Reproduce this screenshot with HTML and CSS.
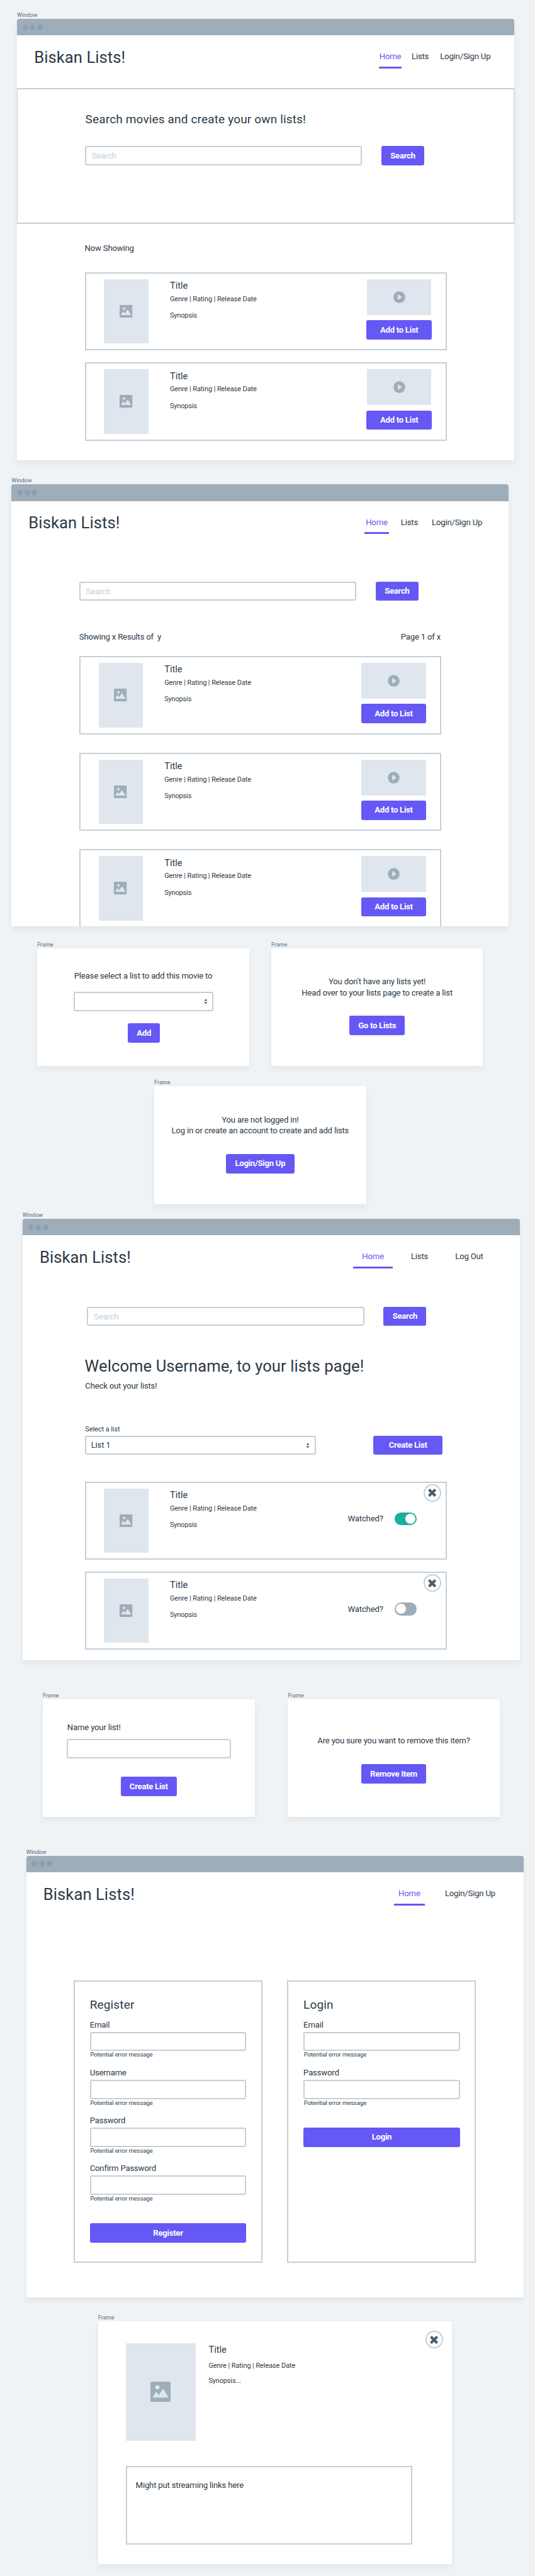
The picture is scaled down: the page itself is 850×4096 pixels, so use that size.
FILE: index.html
```
<!DOCTYPE html>
<html lang="en">
<head>
<meta charset="utf-8">
<title>Biskan Lists wireframes</title>
<link rel="stylesheet" href="styles.css">
</head>
<body>
<svg class="sprite" aria-hidden="true">
  <symbol id="image" viewBox="0 0 28 28">
    <rect width="28" height="28" rx="2" fill="#9eadba"/>
    <circle cx="9.7" cy="7.8" r="2.8" fill="#dfe6ed"/>
    <path d="M2.8 22 8 13.8l3.5 4.8 6.1-8.9L25.2 22z" fill="#dfe6ed"/>
  </symbol>
  <symbol id="play" viewBox="0 0 26 26">
    <circle cx="13" cy="13" r="12.8" fill="#9eadba"/>
    <path d="M9.8 6.6 18.6 13l-8.8 6.4z" fill="#dfe6ed"/>
  </symbol>
  <symbol id="cross" viewBox="0 0 18 18">
    <g fill="#4b5d6b" transform="rotate(45 9 9)">
      <rect x="-.9" y="6.1" width="19.8" height="5.8" rx="1.2"/>
      <rect x="6.1" y="-.9" width="5.8" height="19.8" rx="1.2"/>
    </g>
  </symbol>
  <symbol id="arrows" viewBox="0 0 8 12">
    <path d="M4 .6 7.2 4.6H.8zM4 11.4.8 7.4h6.4z" fill="#2c3a47"/>
  </symbol>
</svg>

<div class="canvas">

  <section class="artboard window home">
    <span class="label">Window</span>
    <div class="screen">
      <div class="bar"><i></i><i></i><i></i></div>
      <header class="header">
        <h1 class="brand">Biskan Lists!</h1>
        <nav class="nav"><a class="active">Home</a><a>Lists</a><a>Login/Sign Up</a></nav>
      </header>
      <div class="hero">
        <h2 class="heading">Search movies and create your own lists!</h2>
        <form class="search"><input class="field" placeholder="Search"><button class="btn" type="button">Search</button></form>
      </div>
      <p class="text section-title">Now Showing</p>
      <div class="cards">
        <article class="card">
          <div class="poster"><svg><use href="#image"/></svg></div>
          <div class="info"><h3>Title</h3><p>Genre | Rating | Release Date</p><p class="synopsis">Synopsis</p></div>
          <div class="side"><div class="thumb"><svg><use href="#play"/></svg></div><button class="btn" type="button">Add to List</button></div>
        </article>
        <article class="card">
          <div class="poster"><svg><use href="#image"/></svg></div>
          <div class="info"><h3>Title</h3><p>Genre | Rating | Release Date</p><p class="synopsis">Synopsis</p></div>
          <div class="side"><div class="thumb"><svg><use href="#play"/></svg></div><button class="btn" type="button">Add to List</button></div>
        </article>
      </div>
    </div>
  </section>

  <section class="artboard window results">
    <span class="label">Window</span>
    <div class="screen">
      <div class="bar"><i></i><i></i><i></i></div>
      <header class="header">
        <h1 class="brand">Biskan Lists!</h1>
        <nav class="nav"><a class="active">Home</a><a>Lists</a><a>Login/Sign Up</a></nav>
      </header>
      <form class="search"><input class="field" placeholder="Search"><button class="btn" type="button">Search</button></form>
      <div class="text summary"><span>Showing x Results of &nbsp;y</span><span>Page 1 of x</span></div>
      <div class="cards">
        <article class="card">
          <div class="poster"><svg><use href="#image"/></svg></div>
          <div class="info"><h3>Title</h3><p>Genre | Rating | Release Date</p><p class="synopsis">Synopsis</p></div>
          <div class="side"><div class="thumb"><svg><use href="#play"/></svg></div><button class="btn" type="button">Add to List</button></div>
        </article>
        <article class="card">
          <div class="poster"><svg><use href="#image"/></svg></div>
          <div class="info"><h3>Title</h3><p>Genre | Rating | Release Date</p><p class="synopsis">Synopsis</p></div>
          <div class="side"><div class="thumb"><svg><use href="#play"/></svg></div><button class="btn" type="button">Add to List</button></div>
        </article>
        <article class="card">
          <div class="poster"><svg><use href="#image"/></svg></div>
          <div class="info"><h3>Title</h3><p>Genre | Rating | Release Date</p><p class="synopsis">Synopsis</p></div>
          <div class="side"><div class="thumb"><svg><use href="#play"/></svg></div><button class="btn" type="button">Add to List</button></div>
        </article>
      </div>
    </div>
  </section>

  <section class="artboard dialog pick-list">
    <span class="label">Frame</span>
    <p class="text">Please select a list to add this movie to</p>
    <div class="field select"><svg><use href="#arrows"/></svg></div>
    <button class="btn" type="button">Add</button>
  </section>

  <section class="artboard dialog message no-lists">
    <span class="label">Frame</span>
    <p class="text">You don't have any lists yet!<br>Head over to your lists page to create a list</p>
    <button class="btn" type="button">Go to Lists</button>
  </section>

  <section class="artboard dialog message logged-out">
    <span class="label">Frame</span>
    <p class="text">You are not logged in!<br>Log in or create an account to create and add lists</p>
    <button class="btn" type="button">Login/Sign Up</button>
  </section>

  <section class="artboard window lists">
    <span class="label">Window</span>
    <div class="screen">
      <div class="bar"><i></i><i></i><i></i></div>
      <header class="header">
        <h1 class="brand">Biskan Lists!</h1>
        <nav class="nav"><a class="active">Home</a><a>Lists</a><a>Log Out</a></nav>
      </header>
      <form class="search"><input class="field" placeholder="Search"><button class="btn" type="button">Search</button></form>
      <h2 class="brand welcome">Welcome Username, to your lists page!</h2>
      <p class="text tagline">Check out your lists!</p>
      <div class="picker">
        <div class="picker-field">
          <span class="small">Select a list</span>
          <div class="field select"><span>List 1</span><svg><use href="#arrows"/></svg></div>
        </div>
        <button class="btn" type="button">Create List</button>
      </div>
      <div class="cards">
        <article class="card">
          <div class="poster"><svg><use href="#image"/></svg></div>
          <div class="info"><h3>Title</h3><p>Genre | Rating | Release Date</p><p class="synopsis">Synopsis</p></div>
          <div class="watched text"><span>Watched?</span><span class="toggle on"></span></div>
          <span class="close"><svg><use href="#cross"/></svg></span>
        </article>
        <article class="card">
          <div class="poster"><svg><use href="#image"/></svg></div>
          <div class="info"><h3>Title</h3><p>Genre | Rating | Release Date</p><p class="synopsis">Synopsis</p></div>
          <div class="watched text"><span>Watched?</span><span class="toggle"></span></div>
          <span class="close"><svg><use href="#cross"/></svg></span>
        </article>
      </div>
    </div>
  </section>

  <section class="artboard dialog new-list">
    <span class="label">Frame</span>
    <p class="text">Name your list!</p>
    <input class="field">
    <button class="btn" type="button">Create List</button>
  </section>

  <section class="artboard dialog remove-item">
    <span class="label">Frame</span>
    <p class="text">Are you sure you want to remove this item?</p>
    <button class="btn" type="button">Remove Item</button>
  </section>

  <section class="artboard window account">
    <span class="label">Window</span>
    <div class="screen">
      <div class="bar"><i></i><i></i><i></i></div>
      <header class="header">
        <h1 class="brand">Biskan Lists!</h1>
        <nav class="nav"><a class="active">Home</a><a>Login/Sign Up</a></nav>
      </header>
      <div class="forms">
        <form class="panel">
          <h2 class="heading">Register</h2>
          <label class="text">Email<input class="field"><small>Potential error message</small></label>
          <label class="text">Username<input class="field"><small>Potential error message</small></label>
          <label class="text">Password<input class="field"><small>Potential error message</small></label>
          <label class="text">Confirm Password<input class="field"><small>Potential error message</small></label>
          <button class="btn" type="button">Register</button>
        </form>
        <form class="panel">
          <h2 class="heading">Login</h2>
          <label class="text">Email<input class="field"><small>Potential error message</small></label>
          <label class="text">Password<input class="field"><small>Potential error message</small></label>
          <button class="btn" type="button">Login</button>
        </form>
      </div>
    </div>
  </section>

  <section class="artboard detail">
    <span class="label">Frame</span>
    <span class="close"><svg><use href="#cross"/></svg></span>
    <div class="movie">
      <div class="poster large"><svg><use href="#image"/></svg></div>
      <div class="info"><h3>Title</h3><p>Genre | Rating | Release Date</p><p class="synopsis">Synopsis...</p></div>
    </div>
    <div class="text links">Might put streaming links here</div>
  </section>

</div>
</body>
</html>
```
FILE: styles.css
```
* { box-sizing: border-box; margin: 0; padding: 0; }

html, body { background: #eff3f6; }
body { width: 850px; height: 4096px; overflow: hidden; }

.sprite { position: absolute; width: 0; height: 0; }

/* Free canvas holding the artboards, drawn at reduced scale */
.canvas {
  --line: 2.75px;
  position: relative;
  width: 1162px;
  height: 5598px;
  zoom: 0.7316;
  font-family: Roboto, "Liberation Sans", sans-serif;
  color: #2c3a47;
}

.artboard {
  position: absolute;
  background: #fff;
  box-shadow: 0 8px 12px rgba(40, 55, 65, .06), 0 0 4px rgba(40, 55, 65, .04);
}
.window { width: 1080px; height: 960px; border-radius: 5px 5px 0 0; }
.home { left: 37px; top: 41px; }
.results { left: 25px; top: 1053px; }
.lists { left: 49px; top: 2649px; }
.account { left: 57px; top: 4033px; }
.pick-list { left: 81px; top: 2061px; }
.no-lists { left: 589px; top: 2061px; }
.logged-out { left: 335px; top: 2361px; }
.new-list { left: 93px; top: 3693px; }
.remove-item { left: 625px; top: 3693px; }
.detail { left: 213px; top: 5045px; width: 768px; height: 528px; }

.label {
  position: absolute;
  left: 0;
  bottom: 100%;
  margin-bottom: -1px;
  font-size: 12.5px;
  font-weight: 500;
  line-height: 16px;
  letter-spacing: -.1px;
  color: #788896;
}

/* Type */
.text { font-size: 18px; line-height: 24px; letter-spacing: -.27px; }
.small { font-size: 15px; line-height: 20px; letter-spacing: -.1px; }
.brand { font-size: 35px; line-height: 42px; font-weight: 400; letter-spacing: .1px; }
.heading { font-size: 26px; line-height: 32px; font-weight: 400; letter-spacing: .2px; }

/* Controls */
.btn {
  height: 42px;
  border: 0;
  border-radius: 4px;
  background: #6558f5;
  color: #fff;
  font: 700 18px/24px Roboto, "Liberation Sans", sans-serif;
  letter-spacing: -.4px;
  white-space: nowrap;
}
.field {
  display: block;
  height: 42px;
  border: var(--line) solid #c3cfd9;
  border-radius: 4px;
  background: #fff;
  font: 400 18px/24px Roboto, "Liberation Sans", sans-serif;
  letter-spacing: -.27px;
  color: #2c3a47;
}
.field::placeholder { color: #c3cfd9; opacity: 1; }
.select {
  display: flex;
  align-items: center;
  justify-content: flex-end;
  padding: 0 11px;
}
.select span { margin-right: auto; }
.select svg { width: 8px; height: 12px; }

.close {
  position: absolute;
  display: flex;
  align-items: center;
  justify-content: center;
  width: 38px;
  height: 38px;
  border: var(--line) solid #c3cfd9;
  border-radius: 50%;
  background: #fff;
}
.close svg { width: 18px; height: 18px; }

.toggle {
  display: flex;
  width: 48px;
  height: 28px;
  padding: 3px;
  border-radius: 14px;
  background: #9eadba;
}
.toggle::before { content: ""; width: 22px; height: 22px; border-radius: 50%; background: #fff; }
.toggle.on { justify-content: flex-end; background: #1aae9f; }

/* Window chrome */
.screen { height: 100%; overflow: hidden; border-radius: 5px 5px 0 0; }
.bar {
  display: flex;
  align-items: center;
  gap: 4px;
  height: 36px;
  padding-left: 12px;
  background: #9eadba;
}
.bar i { width: 12px; height: 12px; border-radius: 50%; background: #8e9eac; }

.header {
  display: flex;
  justify-content: space-between;
  align-items: flex-start;
  height: 115px;
  padding-left: 37px;
}
.header .brand { margin-top: 27px; }
.nav {
  display: grid;
  margin-top: 34px;
  font-size: 18px;
  line-height: 24px;
  letter-spacing: -.27px;
  text-align: center;
  white-space: nowrap;
}
.nav a { padding-bottom: 10px; border-bottom: 4.2px solid transparent; }
.nav .active { color: #6558f5; border-color: #6558f5; }
.home .nav { grid-template-columns: 49px 43px 115px; gap: 19px; margin-right: 49px; }
.results .nav { grid-template-columns: 54px 48px 119px; gap: 20px; margin-right: 53px; }
.lists .nav { grid-template-columns: 86px 78px 100px; gap: 19px; margin-right: 60px; }
.account .nav { grid-template-columns: 68px 132px; gap: 32px; margin-right: 50px; }

.search { display: flex; gap: 42px; margin-left: 147px; }
.search .field { width: 602px; padding: 0 12px; }
.search .btn { width: 93px; }

/* Movie cards */
.cards { display: flex; flex-direction: column; gap: 26px; margin-left: 147px; }
.card {
  position: relative;
  display: flex;
  flex: none;
  width: 786px;
  height: 170px;
  padding: 12.3px 29.3px 0 39.3px;
  border: var(--line) solid #c3cfd9;
}
.poster {
  display: flex;
  flex: none;
  align-items: center;
  justify-content: center;
  width: 96px;
  height: 140px;
  background: #dfe6ed;
}
.poster svg { width: 28px; height: 28px; }
.info { flex: 1; margin: 3px 0 0 47px; font-size: 15px; line-height: 20px; letter-spacing: -.1px; }
.info h3 { margin-bottom: 7px; font-size: 20px; line-height: 24px; font-weight: 400; letter-spacing: 0; }
.info .synopsis { margin-top: 16px; letter-spacing: -.2px; }
.side { display: flex; flex-direction: column; align-items: center; gap: 11px; width: 142px; }
.side .btn { width: 100%; }
.thumb {
  display: flex;
  align-items: center;
  justify-content: center;
  width: 140px;
  height: 78px;
  background: #dfe6ed;
}
.thumb svg { width: 26px; height: 26px; }
.watched { display: flex; align-items: center; gap: 25px; height: 28px; margin: 52px 33px 0 0; }
.card .close { top: 3.3px; right: 9.3px; }

/* Home */
.hero {
  height: 294px;
  padding-top: 49px;
  border: var(--line) solid #c3cfd9;
  border-left-width: 1.4px;
  border-right-width: 1.4px;
}
.hero .heading { margin-left: 147px; }
.hero .search { margin: 42px 0 0 146px; }
.section-title { margin: 41px 0 41px 147px; }

/* Results */
.results .search { margin-top: 60px; }
.results .cards { gap: 40px; }
.summary { display: flex; justify-content: space-between; width: 785px; margin: 67px 0 29px 147px; }

/* Lists */
.lists .search { margin: 40px 0 0 140px; }
.welcome { margin: 66px 0 0 135px; }
.tagline { margin: 11px 0 72px 136px; }
.picker { display: flex; align-items: flex-end; gap: 125px; margin: 0 0 58px 135px; }
.picker-field { display: flex; flex-direction: column; gap: 3px; width: 502px; }
.picker-field .small { padding-left: 1px; }
.picker .btn { width: 150px; }
.lists .cards { margin-left: 135px; }

/* Dialogs */
.dialog {
  display: flex;
  flex-direction: column;
  align-items: center;
  width: 460px;
  height: 256px;
  text-align: center;
}
.pick-list { padding-top: 48px; }
.pick-list .select { width: 304px; margin: 23px 0 26px 2px; }
.pick-list .btn { width: 69px; margin-left: 3px; }
.message { padding-top: 60.5px; gap: 38.5px; }
.no-lists .btn { width: 120px; }
.logged-out .btn { width: 149px; }
.new-list { padding-top: 50px; }
.new-list .text { align-self: flex-start; margin-left: 53px; }
.new-list .field { width: 356px; margin: 13px 0 40px; }
.new-list .btn { width: 122px; }
.remove-item { padding-top: 78px; gap: 39px; }
.remove-item .btn { width: 140px; }

/* Account */
.forms { display: flex; gap: 54px; margin: 120px 0 0 103px; }
.panel {
  display: flex;
  flex-direction: column;
  width: 410px;
  height: 614px;
  padding: 34.3px 32.3px 0;
  border: var(--line) solid #c3cfd9;
}
.panel .heading { margin-bottom: 16px; }
.panel label { height: 85px; margin-bottom: 19px; }
.panel .field { width: 100%; margin-top: 3px; }
.panel small { display: block; margin-left: 1px; font-size: 13px; line-height: 16px; letter-spacing: -.1px; }
.panel .btn { margin-top: 27px; }

/* Movie detail */
.detail { padding: 48px 60px 0; }
.detail .close { top: 21px; right: 19px; }
.movie { display: flex; }
.poster.large { width: 152px; height: 212px; }
.poster.large svg { width: 44px; height: 44px; }
.movie .info { margin-left: 28px; }
.movie h3 { margin-bottom: 13px; }
.movie .info .synopsis { margin-top: 12px; }
.links {
  width: 622px;
  height: 170px;
  margin-top: 55px;
  padding: 26.3px 19px;
  border: var(--line) solid #c3cfd9;
}
```
